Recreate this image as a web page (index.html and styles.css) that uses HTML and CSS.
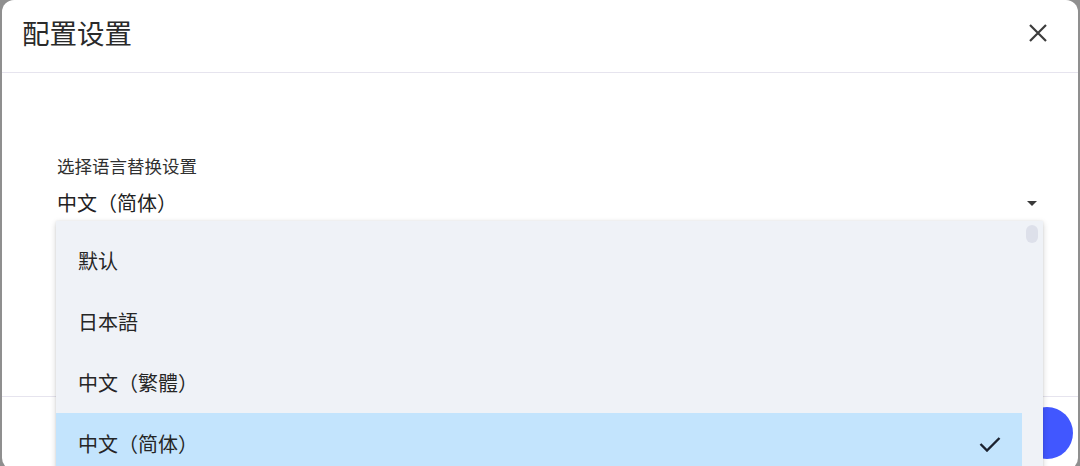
FILE: index.html
```html
<!DOCTYPE html>
<html lang="zh">
<head>
<meta charset="utf-8">
<title>配置设置</title>
<link rel="stylesheet" href="styles.css">
</head>
<body>
<div class="dialog">
  <div class="dialog-header">
    <h1 class="dialog-title">配置设置</h1>
    <button class="close-btn" aria-label="关闭">
      <svg width="18" height="18" viewBox="0 0 18 18"><path d="M1 1 L17 17 M17 1 L1 17" stroke="#3c3c3c" stroke-width="2.2" fill="none"/></svg>
    </button>
  </div>
  <div class="dialog-body">
    <div class="field-label">选择语言替换设置</div>
    <div class="select">
      <span class="select-value">中文（简体）</span>
      <svg class="select-arrow" width="10" height="5" viewBox="0 0 10 5"><path d="M0 0 L10 0 L5 5 Z" fill="#3a3a3a"/></svg>
    </div>
  </div>
  <div class="dialog-footer">
    <span class="fab"></span>
  </div>

  <div class="menu">
    <ul class="menu-list">
      <li class="menu-item">默认</li>
      <li class="menu-item">日本語</li>
      <li class="menu-item">中文（繁體）</li>
      <li class="menu-item selected">中文（简体）
        <svg class="check" width="22" height="16" viewBox="0 0 22 16"><path d="M1.5 8 L8 14.5 L20.5 2" stroke="#1b2230" stroke-width="2.4" fill="none"/></svg>
      </li>
    </ul>
    <div class="scrollbar"><span class="thumb"></span></div>
  </div>
</div>
</body>
</html>
```
FILE: styles.css
```css
* { box-sizing: border-box; }
html, body {
  margin: 0;
  height: 466px;
  overflow: hidden;
}
body {
  background: #8f8f8f;
  font-family: "Noto Sans CJK SC", "Noto Sans", sans-serif;
  color: #262626;
}
.dialog {
  position: relative;
  margin: 0 2px 0 2px;
  height: 470px;
  background: #ffffff;
  border-radius: 12px;
  display: flex;
  flex-direction: column;
  overflow: hidden;
}
.dialog-header {
  height: 73px;
  flex: none;
  display: flex;
  align-items: center;
  justify-content: space-between;
  padding: 0 31px 6px 20px;
  border-bottom: 1px solid #e6e4ee;
}
.dialog-title {
  margin: 0;
  font-size: 27.5px;
  font-weight: 400;
  color: #2a2a2a;
  line-height: 1;
}
.close-btn {
  border: 0;
  background: none;
  padding: 0;
  width: 18px;
  height: 18px;
  display: flex;
}
.dialog-body {
  height: 323px;
  flex: none;
  padding: 80px 36px 0 55px;
}
.field-label {
  font-size: 17.5px;
  line-height: 25px;
  color: #303030;
}
.select {
  margin-top: 11px;
  display: flex;
  align-items: center;
  justify-content: space-between;
  height: 28px;
}
.select-value {
  font-size: 20px;
  line-height: 28px;
  color: #222;
}
.select-arrow {
  margin-right: 5px;
  margin-top: 0;
}
.dialog-footer {
  flex: 1;
  border-top: 1px solid #e6e4ee;
  position: relative;
}
.fab {
  position: absolute;
  right: 5px;
  top: 10px;
  width: 52px;
  height: 52px;
  border-radius: 50%;
  background: #4157ff;
}
.menu {
  position: absolute;
  left: 54px;
  top: 221px;
  width: 987px;
  height: 260px;
  background: #eff2f7;
  box-shadow: 0 2px 6px rgba(0,0,0,0.18), 0 0 2px rgba(0,0,0,0.08);
  display: flex;
}
.menu-list {
  list-style: none;
  margin: 0;
  padding: 9px 0 0 0;
  flex: 1;
}
.menu-item {
  height: 61px;
  display: flex;
  align-items: center;
  justify-content: space-between;
  padding: 0 21px 0 22px;
  font-size: 20px;
  color: #262626;
}
.menu-item.selected {
  background: #c3e4fd;
}
.scrollbar {
  width: 21px;
  flex: none;
  padding: 4px 4px 0 4px;
}
.thumb {
  display: block;
  width: 12px;
  height: 18px;
  border-radius: 6px;
  background: #dde0ea;
}
```
